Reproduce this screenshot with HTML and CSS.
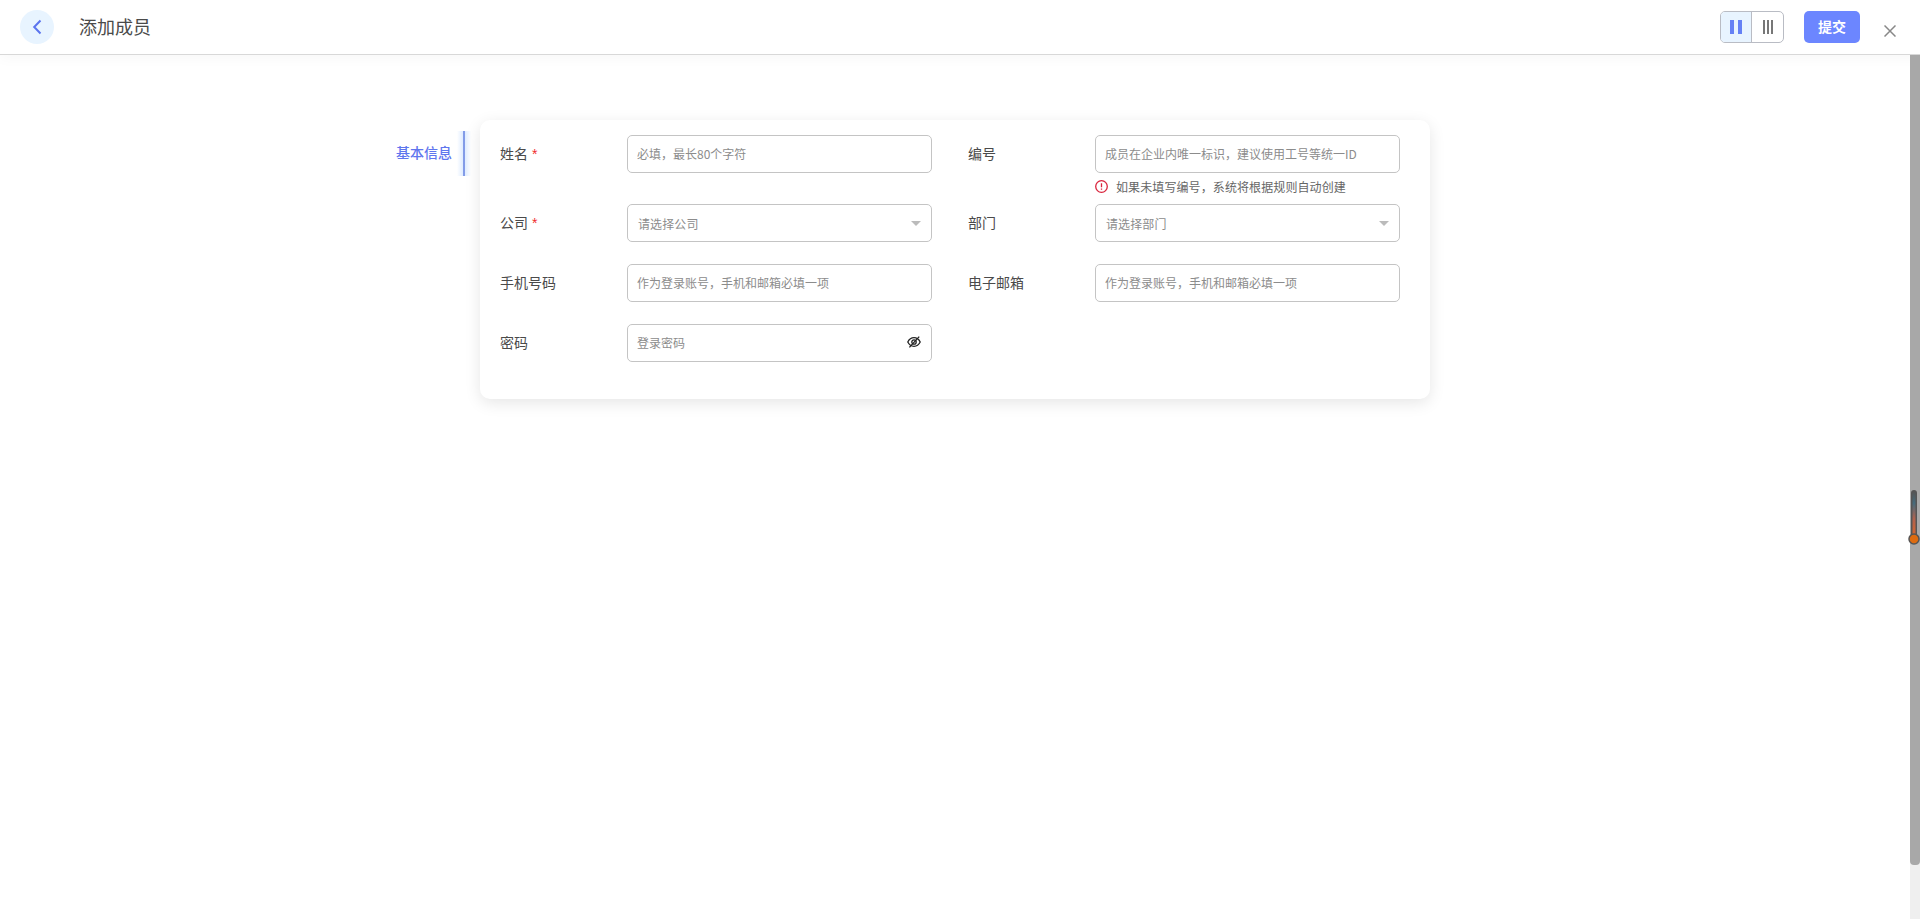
FILE: index.html
```
<!DOCTYPE html>
<html lang="zh-CN">
<head>
    <meta charset="UTF-8">
    <meta name="viewport" content="width=device-width, initial-scale=1.0">
    <title>添加成员</title>
    <link rel="stylesheet" href="styles.css">
</head>
<body>
    <header class="header">
        <button class="back" aria-label="返回">
            <svg width="10" height="16" viewBox="0 0 10 16"><path d="M8.5 1.5L2.2 8L8.5 14.5"/></svg>
        </button>
        <h1>添加成员</h1>
        <div class="layout-switch">
            <button class="active" aria-label="两列">
                <svg width="12" height="14" viewBox="0 0 12 14"><path d="M0 0h4v14H0zM8 0h4v14H8z"/></svg>
            </button>
            <button aria-label="三列">
                <svg width="12" height="14" viewBox="0 0 12 14"><path d="M1 0h2v14H1zM5 0h2v14H5zM9 0h2v14H9z"/></svg>
            </button>
        </div>
        <button class="submit">提交</button>
        <button class="close" aria-label="关闭">
            <svg width="12" height="12" viewBox="0 0 12 12"><path d="M0.5 0.5L11.5 11.5M11.5 0.5L0.5 11.5"/></svg>
        </button>
    </header>

    <div class="body">
        <main class="content">
            <nav class="side">
                <a class="side-item">基本信息</a>
            </nav>
            <form class="card">
                <div class="field">
                    <label>姓名<i>*</i></label>
                    <div class="control"><input type="text" placeholder="必填，最长80个字符"></div>
                </div>
                <div class="field">
                    <label>编号</label>
                    <div class="control">
                        <input type="text" placeholder="成员在企业内唯一标识，建议使用工号等统一ID">
                        <p class="hint">
                            <svg width="13" height="13" viewBox="0 0 13 13"><circle cx="6.5" cy="6.5" r="5.8"/><path d="M6.5 3.3v4M6.5 8.4v1.3"/></svg>
                            如果未填写编号，系统将根据规则自动创建
                        </p>
                    </div>
                </div>
                <div class="field">
                    <label>公司<i>*</i></label>
                    <div class="control"><div class="select">请选择公司</div></div>
                </div>
                <div class="field">
                    <label>部门</label>
                    <div class="control"><div class="select">请选择部门</div></div>
                </div>
                <div class="field">
                    <label>手机号码</label>
                    <div class="control"><input type="text" placeholder="作为登录账号，手机和邮箱必填一项"></div>
                </div>
                <div class="field">
                    <label>电子邮箱</label>
                    <div class="control"><input type="text" placeholder="作为登录账号，手机和邮箱必填一项"></div>
                </div>
                <div class="field">
                    <label>密码</label>
                    <div class="control">
                        <input type="password" placeholder="登录密码">
                        <svg class="eye" width="14" height="12" viewBox="0 0 14 12"><path d="M0.8 6C2.2 3.2 4.4 1.7 7 1.7S11.8 3.2 13.2 6C11.8 8.8 9.6 10.3 7 10.3S2.2 8.8 0.8 6z"/><circle cx="7" cy="6" r="2.2"/><path d="M12.2 0.6L2.4 11.4"/></svg>
                    </div>
                </div>
            </form>
        </main>
        <div class="scrollbar">
            <div class="thumb"></div>
            <svg class="thermo" width="12" height="58" viewBox="0 0 12 58">
                <defs>
                    <linearGradient id="heat" x1="0" y1="0" x2="0" y2="1">
                        <stop offset="0" stop-color="#555"/>
                        <stop offset="0.25" stop-color="#456b7c"/>
                        <stop offset="0.6" stop-color="#b0624e"/>
                        <stop offset="1" stop-color="#d9662c"/>
                    </linearGradient>
                </defs>
                <rect x="3" y="1" width="6" height="47" rx="3" fill="#555"/>
                <rect x="4.5" y="3" width="3" height="45" fill="url(#heat)"/>
                <circle cx="6" cy="50" r="5" fill="#dd6b10" stroke="#555" stroke-width="1.5"/>
            </svg>
        </div>
    </div>
</body>
</html>
```

FILE: styles.css
```
* {
    box-sizing: border-box;
}
body {
    margin: 0;
    height: 100vh;
    display: flex;
    flex-direction: column;
    overflow: hidden;
    background: #fff;
    color: #4a4a4a;
    font-family: "Noto Sans CJK SC", sans-serif;
    font-size: 14px;
}
button {
    display: flex;
    align-items: center;
    justify-content: center;
    padding: 0;
    border: 0;
    background: none;
    font-family: inherit;
}
svg {
    display: block;
    flex: none;
}

/* header */
.header {
    display: flex;
    align-items: center;
    height: 55px;
    flex: none;
    padding: 0 24px 0 20px;
    border-bottom: 1px solid #d8d8d8;
    box-shadow: 0 2px 14px rgba(0, 0, 0, 0.04);
}
.header h1 {
    margin: 0 auto 0 25px;
    padding-bottom: 2px;
    font-size: 18px;
    font-weight: 400;
    line-height: 26px;
}
.back {
    width: 34px;
    height: 34px;
    border-radius: 50%;
    background: #e8f4ff;
}
.back path {
    fill: none;
    stroke: #5b74ee;
    stroke-width: 2;
}
.layout-switch {
    display: flex;
    width: 64px;
    height: 32px;
    border: 1px solid #b9bcc4;
    border-radius: 5px;
    overflow: hidden;
}
.layout-switch button {
    flex: 1;
    fill: #777;
}
.layout-switch .active {
    flex: none;
    width: 31px;
    background: #e8f4ff;
    border-right: 1px solid #b9bcc4;
    fill: #6581f5;
}
.submit {
    width: 56px;
    height: 32px;
    margin: 0 24px 0 20px;
    padding-bottom: 2px;
    border-radius: 5px;
    background: #6c86ff;
    color: #fff;
    font-size: 14px;
    font-weight: 700;
}
.close {
    margin-top: 7px;
}
.close path {
    stroke: #888;
    stroke-width: 1.5;
}

/* page body */
.body {
    display: flex;
    flex: 1;
}
.content {
    display: flex;
    align-items: flex-start;
    flex: 1;
    padding: 65px 0 0 380px;
}
.side {
    width: 100px;
    padding: 11px 15px 0 0;
}
.side-item {
    position: relative;
    display: block;
    height: 45px;
    padding-right: 11px;
    border-right: 2px solid #6678d8;
    color: #5f76ee;
    font-weight: 500;
    line-height: 43px;
    text-align: right;
}
/* soft glow around the active bar */
.side-item::after {
    content: "";
    position: absolute;
    top: 0;
    right: -8px;
    width: 14px;
    height: 45px;
    background: linear-gradient(90deg, rgba(170, 205, 255, 0), rgba(170, 205, 255, 0.45), rgba(170, 205, 255, 0));
}

/* form */
.card {
    display: grid;
    grid-template-columns: 432px 432px;
    column-gap: 36px;
    align-content: start;
    width: 950px;
    height: 279px;
    padding: 15px 20px 0;
    border-radius: 10px;
    background: #fff;
    box-shadow: 0 4px 16px rgba(0, 0, 0, 0.1);
}
.field {
    display: flex;
    min-height: 60px;
}
.field label {
    width: 127px;
    line-height: 36px;
}
.field label i {
    margin-left: 4px;
    color: #f02d2d;
    font-family: "Liberation Sans", sans-serif;
    font-style: normal;
}
.control {
    position: relative;
    flex: 1;
}
.control input,
.select {
    display: block;
    width: 100%;
    height: 38px;
    padding: 0 9px 2px;
    border: 1px solid #c4c4c4;
    border-radius: 5px;
    background: #fff;
    color: #8c8c8c;
    font-family: inherit;
    font-size: 12px;
}
.control input::placeholder {
    color: #8c8c8c;
}
.select {
    display: flex;
    align-items: center;
    justify-content: space-between;
    padding: 1px 10px 0;
    letter-spacing: 0.1px;
}
.select::after {
    content: "";
    margin-top: -1px;
    border: 5px solid transparent;
    border-top-color: #bbb;
    border-bottom: 0;
}
.hint {
    display: flex;
    align-items: center;
    gap: 8px;
    height: 31px;
    margin: 0;
    padding-bottom: 4px;
    color: #666;
    font-size: 12px;
    letter-spacing: 0.1px;
}
.hint svg {
    fill: none;
    stroke: #d9253d;
    stroke-width: 1.3;
}
.eye {
    position: absolute;
    top: 12px;
    right: 11px;
    fill: none;
    stroke: #222;
    stroke-width: 1.3;
}

/* scrollbar */
.scrollbar {
    position: relative;
    width: 10px;
    background: #efefef;
}
.thumb {
    height: 810px;
    border-radius: 0 0 4px 4px;
    background: #a8a8a8;
}
.thermo {
    position: absolute;
    top: 434px;
    left: -2px;
}
```
